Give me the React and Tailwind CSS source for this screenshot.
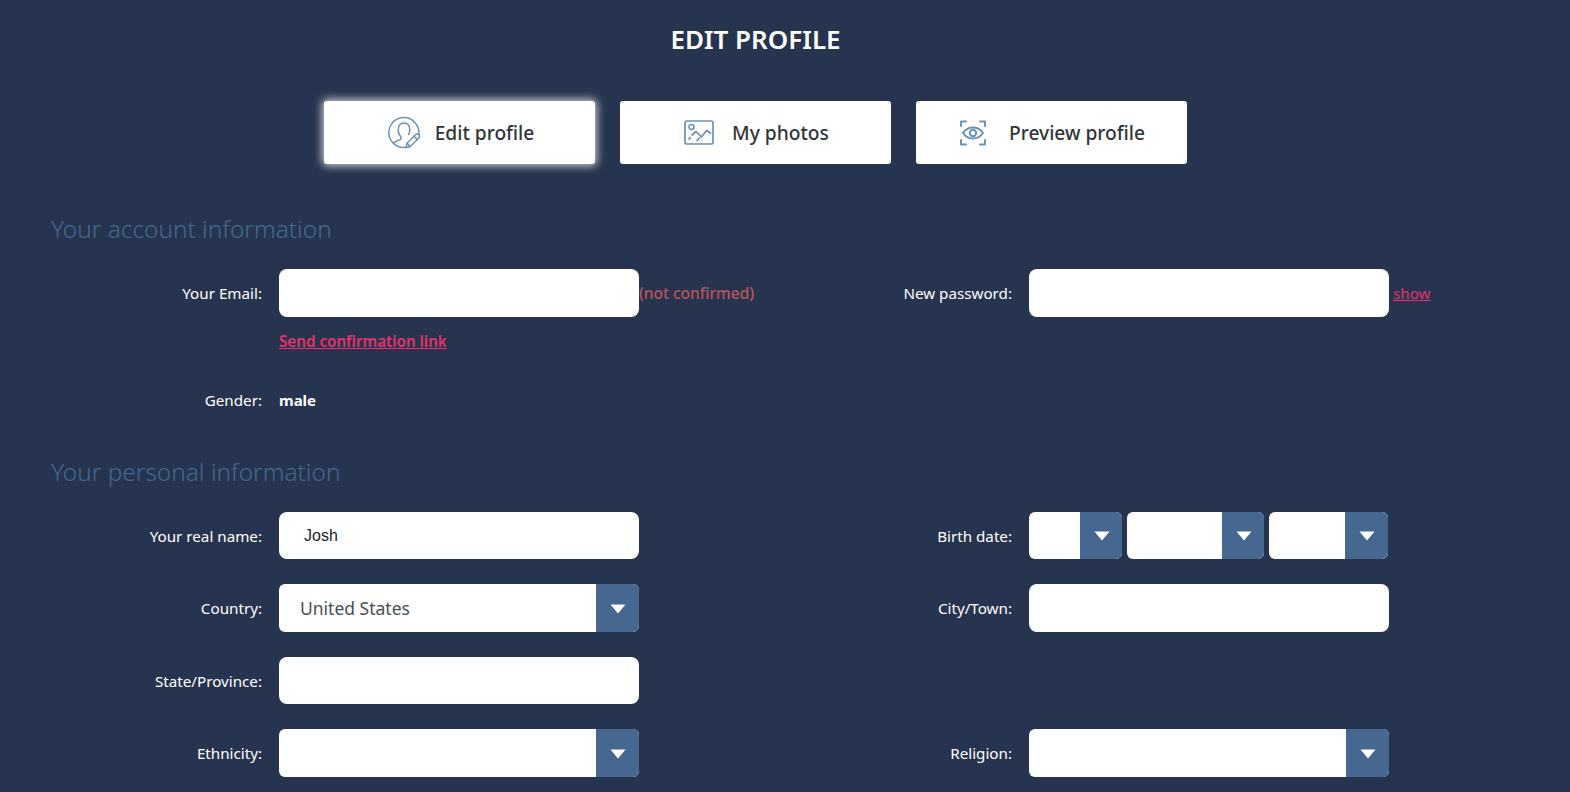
import React from 'react'

const font = "font-['Noto_Sans','Open_Sans',sans-serif]"

function EditIcon() {
    return (
        <svg width="34" height="34" viewBox="0 0 34 34" fill="none" stroke="#6a93b5" strokeWidth="1.5" strokeLinecap="round" strokeLinejoin="round">
            <path d="M23 30.200A15 15 0 1 1 31.600 19" />
            <path d="M6.500 27.500c1.500-2.500 5-3 7-4.200.8-.5.7-2-.1-3-1.300-1.600-2.200-3.800-2.200-6.500C11.200 9.500 13.600 7 17 7s5.800 2.500 5.800 6.800c0 1.800-.4 3.300-1.100 4.700" />
            <path d="M19 31.800l1-4.500 8.500-8.500a1.800 1.800 0 0 1 3.300 3.200L23.300 30.500z" fill="#fff" />
            <path d="M27 20.300l3.300 3.300M20 27.300l3.300 3.200" />
        </svg>
    )
}

function PhotoIcon() {
    return (
        <svg width="30" height="25" viewBox="0 0 30 25" fill="none" stroke="#6a93b5" strokeWidth="1.700" strokeLinecap="round" strokeLinejoin="round">
            <rect x="1" y="1" width="28" height="23" rx="2" />
            <circle cx="7.500" cy="7" r="2.500" />
            <path d="M8 15l4-3.500 5.500 5.500 5-6.500 4 2.500" />
            <path d="M5 19l1.500-1.300M13 20.500l2.500-2.500" />
        </svg>
    )
}

function EyeIcon() {
    return (
        <svg width="26" height="26" viewBox="0 0 26 26" fill="none" stroke="#6a93b5" strokeWidth="2" strokeLinecap="round" strokeLinejoin="round">
            <path d="M1 6V1.500h5M20 1.500h5V6M1 20v4.500h5M20 24.500h5V20" />
            <path d="M3 13c2.500-3.700 6-5.500 10-5.500S20.500 9.300 23 13c-2.500 3.700-6 5.500-10 5.500S5.500 16.700 3 13z" />
            <circle cx="13" cy="13" r="3.200" />
        </svg>
    )
}

function TabButton({ icon, label, active, gap }) {
    return (
        <button className={`w-[271px] h-[63px] pl-[2px] bg-white rounded-[3px] flex items-center justify-center text-[19.2px] font-medium text-[#2f3438] ${gap} ${active ? 'shadow-[0_0_8px_2px_rgba(255,255,255,0.75)]' : ''}`}>
            {icon}
            <span className="pt-[2px]">{label}</span>
        </button>
    )
}

function Arrow() {
    return (
        <svg width="16" height="10" viewBox="0 0 16 10" className="block ml-px mt-px">
            <path d="M0.500 0.500h15L8 9.500z" fill="#fff" />
        </svg>
    )
}

function Select({ value, className = 'w-[360px] h-12', arrow = 'w-[43px]' }) {
    return (
        <div className={`${className} bg-white rounded-[6px] overflow-hidden flex`}>
            <div className="flex-1 pl-[21px] flex items-center text-[17.5px] text-[#4a4f55]">{value}</div>
            <div className={`${arrow} bg-[#46678f] flex items-center justify-center`}>
                <Arrow />
            </div>
        </div>
    )
}

function Input({ value, className = 'h-12' }) {
    return (
        <div className={`w-[360px] ${className} bg-white rounded-[8px] pl-[25px] pt-px flex items-center text-[16px] text-[#222] font-['Liberation_Sans',sans-serif]`}>
            {value}
        </div>
    )
}

function Field({ label, children, className = 'w-[750px]' }) {
    return (
        <div className={`${className} flex items-center`}>
            <label className="w-[211px] text-right text-[15.2px] leading-[24px] text-white shrink-0">{label}</label>
            <div className="ml-[17px] flex items-center">{children}</div>
        </div>
    )
}

export default function App() {
    return (
        <div className={`w-full h-[792px] overflow-hidden bg-[#27344f] ${font}`}>
            <div className="w-[1511px] pl-[51px]">
                <h1 className="-ml-[51px] pt-[21px] text-center text-[26px] leading-[36px] font-semibold text-white">EDIT PROFILE</h1>

                <div className="-ml-[51px] mt-[44px] flex justify-center gap-[25px]">
                    <TabButton icon={<EditIcon />} label="Edit profile" active gap="gap-[14px]" />
                    <TabButton icon={<PhotoIcon />} label="My photos" gap="gap-[18px]" />
                    <TabButton icon={<EyeIcon />} label="Preview profile" gap="gap-[23px]" />
                </div>

                {/* Account */}
                <h2 className="mt-[47px] text-[24.4px] leading-[36px] font-light text-[#46678f]">Your account information</h2>

                <div className="mt-[22px] flex">
                    <Field label="Your Email:">
                        <Input />
                        <span className="text-[15.5px] leading-[24px] font-medium text-[#b9545c]">(not confirmed)</span>
                    </Field>
                    <Field label="New password:" className="">
                        <Input />
                        <a className="ml-1 text-[15.2px] text-[#e8306a] underline">show</a>
                    </Field>
                </div>
                <div className="mt-[13px] ml-[228px] text-[15.2px] leading-[22px] font-semibold text-[#e8306a] underline">Send confirmation link</div>
                <div className="mt-[36px]">
                    <Field label="Gender:">
                        <span className="text-[15px] leading-[22px] font-bold text-white">male</span>
                    </Field>
                </div>

                {/* Personal */}
                <h2 className="mt-[42px] text-[24.4px] leading-[36px] font-light text-[#46678f]">Your personal information</h2>

                <div className="mt-[22px] flex flex-col gap-[25px]">
                    <div className="flex">
                        <Field label="Your real name:">
                            <Input value="Josh" className="h-[47px]" />
                        </Field>
                        <Field label="Birth date:" className="">
                            <div className="flex gap-[5px]">
                                <Select className="w-[93px] h-[47px]" arrow="w-[42px]" />
                                <Select className="w-[137px] h-[47px]" arrow="w-[42px]" />
                                <Select className="w-[119px] h-[47px]" arrow="w-[43px]" />
                            </div>
                        </Field>
                    </div>
                    <div className="flex">
                        <Field label="Country:">
                            <Select value="United States" />
                        </Field>
                        <Field label="City/Town:" className="">
                            <Input />
                        </Field>
                    </div>
                    <div className="flex">
                        <Field label="State/Province:">
                            <Input className="h-[47px]" />
                        </Field>
                    </div>
                    <div className="flex">
                        <Field label="Ethnicity:">
                            <Select />
                        </Field>
                        <Field label="Religion:" className="">
                            <Select />
                        </Field>
                    </div>
                </div>
            </div>
        </div>
    )
}
